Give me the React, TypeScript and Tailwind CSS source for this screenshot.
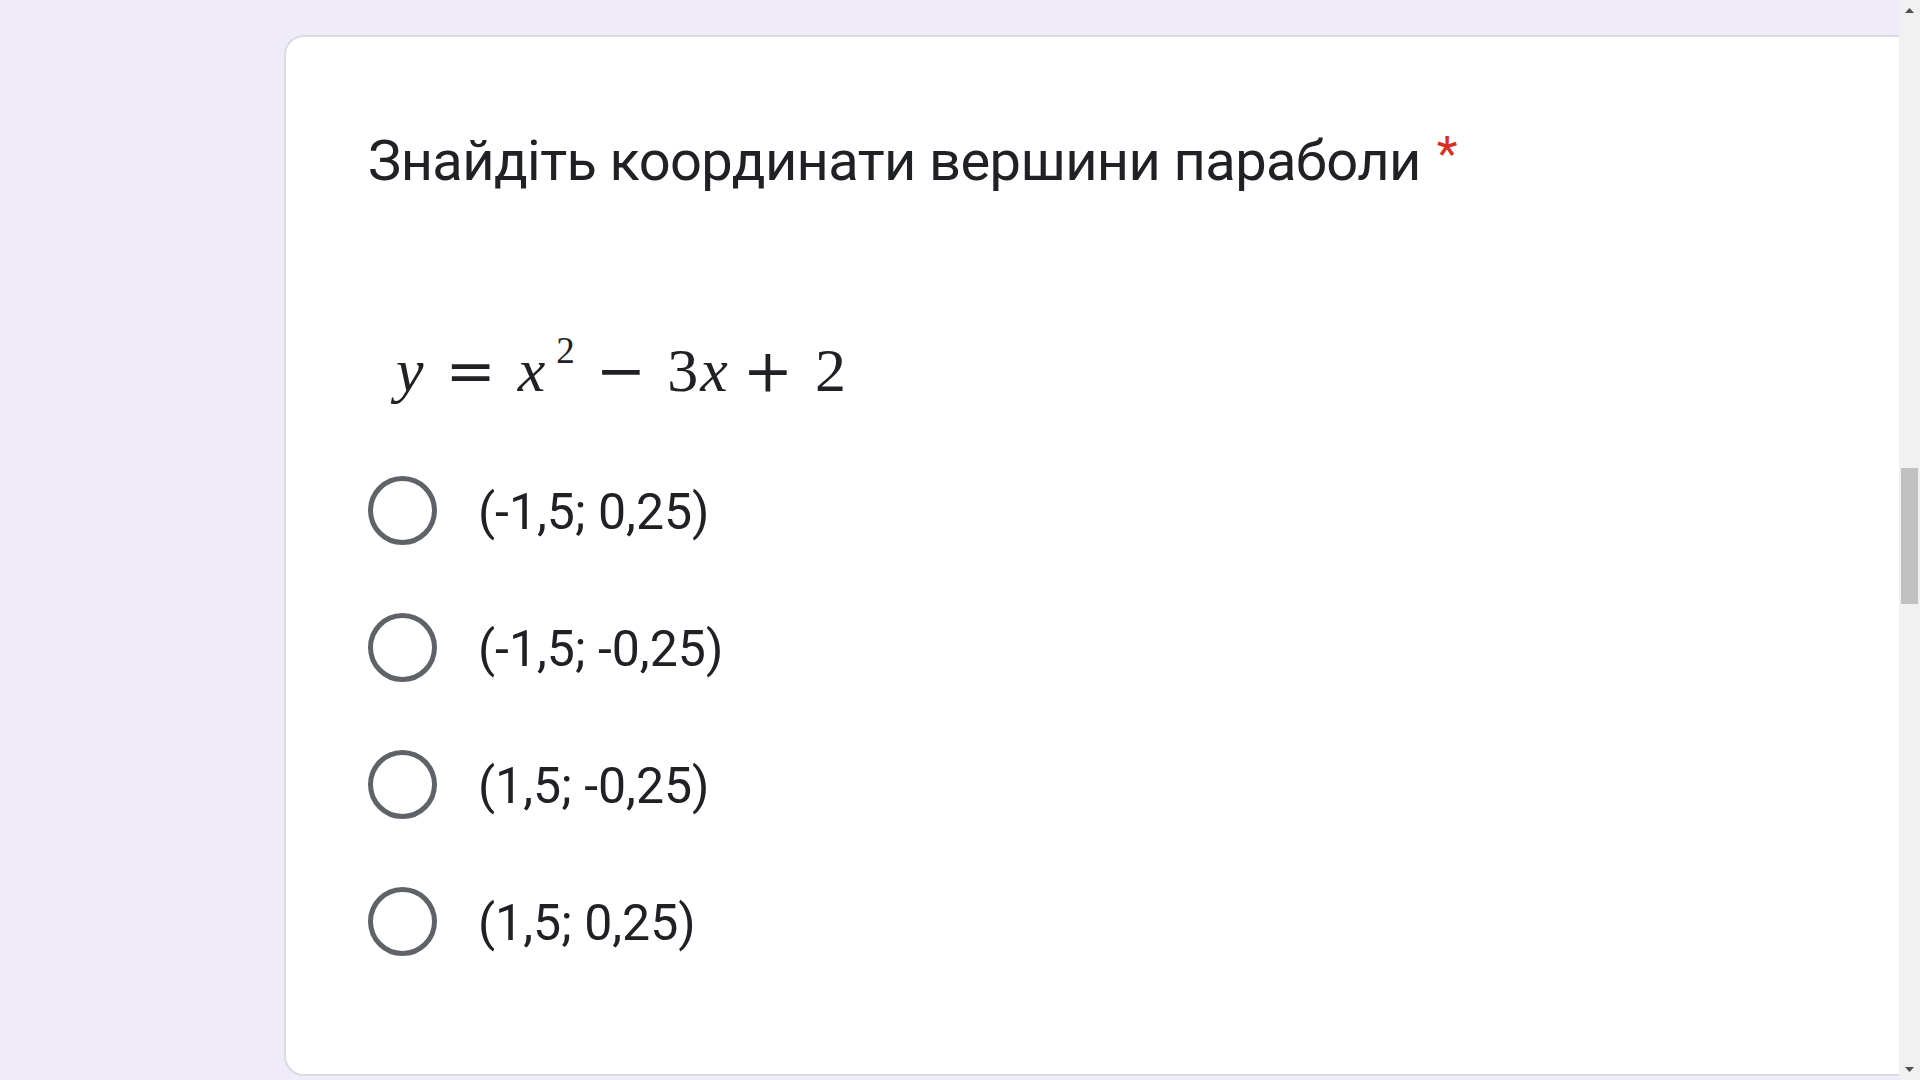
const options = ['(-1,5; 0,25)', '(-1,5; -0,25)', '(1,5; -0,25)', '(1,5; 0,25)'];

const Radio = ({ label }: { label: string }) => {
  return (
    <div className="flex h-[137px] items-center">
      <div className="h-[69px] w-[69px] shrink-0 rounded-full border-[5px] border-[#5f6368]" />
      <span className="ml-[41px] pt-[3px] text-[50px] leading-[56px] text-[#202124]">{label}</span>
    </div>
  );
};

// formula drawn as typed text: serif letters, wider operators from DejaVu Serif
const Formula = () => {
  const op = { fontFamily: '"DejaVu Serif", serif' };
  return (
    <div
      className="flex h-[70px] items-baseline text-[62px] leading-[70px] text-[#202124]"
      style={{ fontFamily: '"Liberation Serif", serif' }}
    >
      <span className="ml-[28px] italic">y</span>
      <span className="ml-[22px] text-[60px]" style={op}>=</span>
      <span className="ml-[22px] italic">x</span>
      <span className="ml-[11px] -translate-y-[28px] text-[37px]">2</span>
      <span className="ml-[21px] text-[60px]" style={op}>−</span>
      <span className="ml-[21px]">3</span>
      <span className="ml-[2px] italic">x</span>
      <span className="ml-[15px] text-[60px]" style={op}>+</span>
      <span className="ml-[22px]">2</span>
    </div>
  );
};

const Scrollbar = () => {
  return (
    <div className="flex h-full w-[21px] shrink-0 flex-col bg-[#f1f1f1]">
      <div className="flex h-[21px] items-center justify-center">
        <svg width="9" height="5" viewBox="0 0 9 5">
          <polygon points="4.5,0 9,5 0,5" fill="#505050" />
        </svg>
      </div>
      <div className="flex-1">
        <div className="ml-[2px] mt-[447px] h-[136px] w-[17px] bg-[#c1c1c1]" />
      </div>
      <div className="flex h-[21px] items-center justify-center">
        <svg width="9" height="5" viewBox="0 0 9 5">
          <polygon points="0,0 9,0 4.5,5" fill="#505050" />
        </svg>
      </div>
    </div>
  );
};

export default function App() {
  return (
    <div
      className="flex h-screen w-full overflow-hidden bg-[#f0ebf8]"
      style={{ fontFamily: 'Roboto, "Noto Sans", sans-serif' }}
    >
      <main className="min-w-0 flex-1 overflow-hidden pl-[284px] pt-[35px]">
        <div className="h-[1041px] w-[1700px] rounded-[20px] border-2 border-[#dadce0] bg-white pl-[82px] pt-[90px]">
          <h1 className="h-[68px] text-[56px] leading-[68px] font-normal tracking-[-0.6px] text-[#202124]">
            Знайдіть координати вершини параболи
            <span className="ml-[16px] inline-block -translate-y-[10px] text-[48px] leading-none text-[#d93025]">*</span>
          </h1>
          <div className="mt-[140px]">
            <Formula />
          </div>
          <div className="mt-[37px] flex flex-col">
            {options.map((o) => (
              <Radio key={o} label={o} />
            ))}
          </div>
        </div>
      </main>
      <Scrollbar />
    </div>
  );
}
